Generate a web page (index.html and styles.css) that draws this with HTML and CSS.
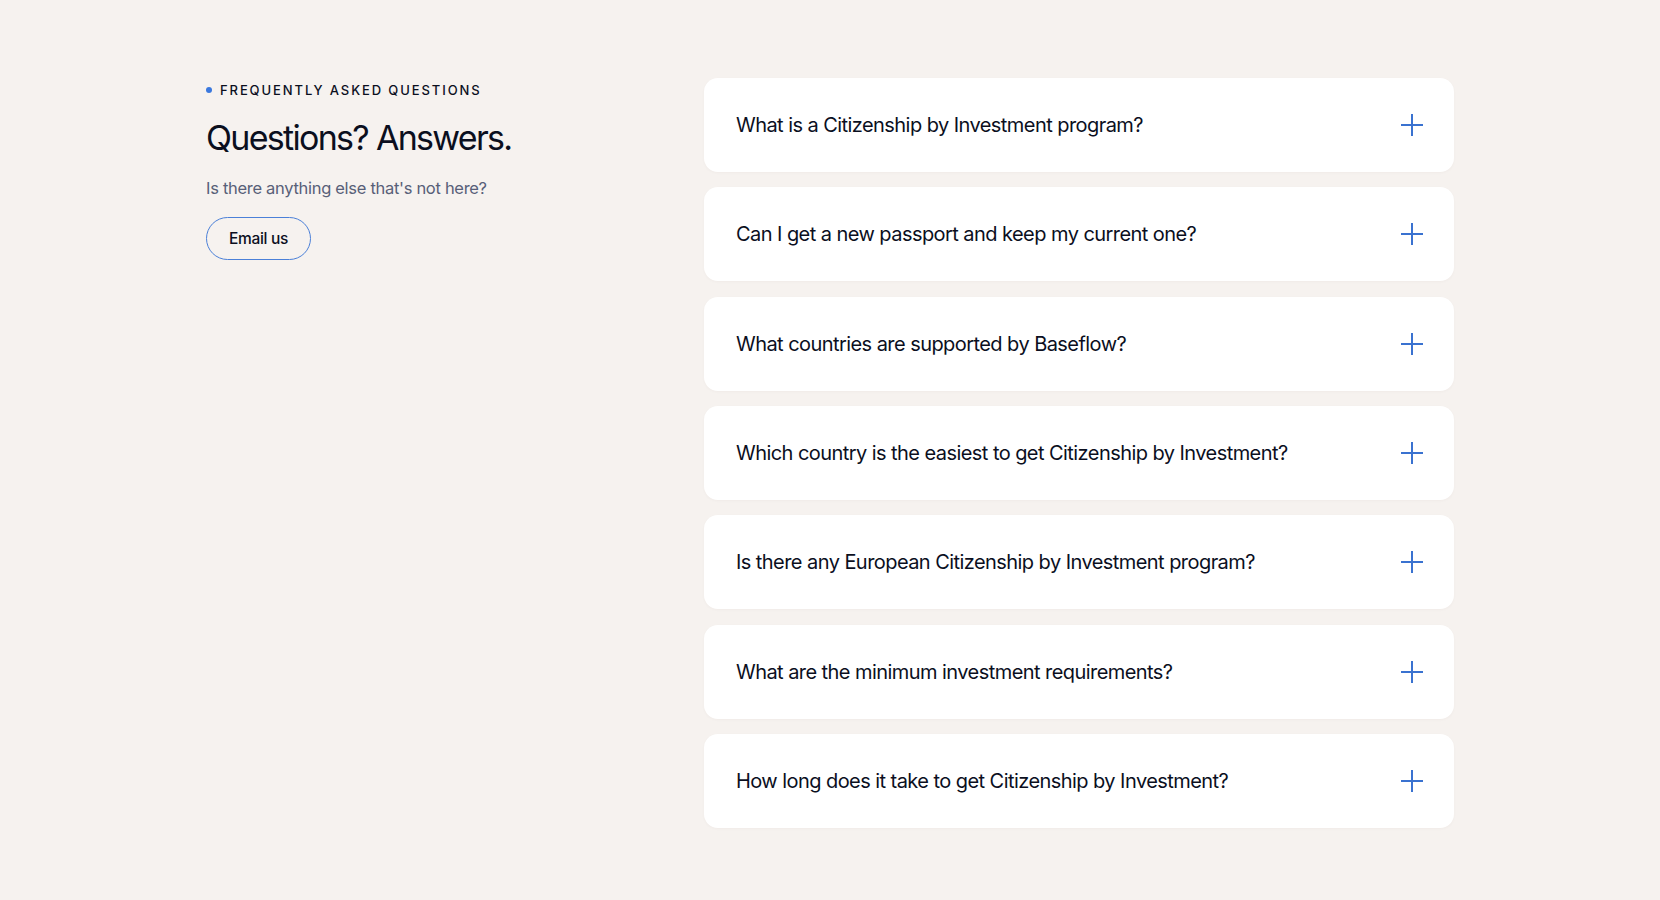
FILE: index.html
```html
<!DOCTYPE html>
<html lang="en">
<head>
    <meta charset="UTF-8">
    <meta name="viewport" content="width=device-width, initial-scale=1.0">
    <title>FAQ</title>
    <link rel="stylesheet" href="styles.css">
</head>
<body>
    <section class="faq">
        <div class="faq-intro">
            <div class="eyebrow">
                <span class="eyebrow-dot"></span>
                Frequently asked questions
            </div>
            <h2>Questions? Answers.</h2>
            <p class="lead">Is there anything else that's not here?</p>
            <a href="#" class="btn-outline">Email us</a>
        </div>

        <div class="faq-list">
            <div class="faq-item">
                <span>What is a Citizenship by Investment program?</span>
                <svg class="plus" viewBox="0 0 24 24"><path d="M12 1v22M1 12h22"/></svg>
            </div>
            <div class="faq-item">
                <span>Can I get a new passport and keep my current one?</span>
                <svg class="plus" viewBox="0 0 24 24"><path d="M12 1v22M1 12h22"/></svg>
            </div>
            <div class="faq-item">
                <span>What countries are supported by Baseflow?</span>
                <svg class="plus" viewBox="0 0 24 24"><path d="M12 1v22M1 12h22"/></svg>
            </div>
            <div class="faq-item">
                <span>Which country is the easiest to get Citizenship by Investment?</span>
                <svg class="plus" viewBox="0 0 24 24"><path d="M12 1v22M1 12h22"/></svg>
            </div>
            <div class="faq-item">
                <span>Is there any European Citizenship by Investment program?</span>
                <svg class="plus" viewBox="0 0 24 24"><path d="M12 1v22M1 12h22"/></svg>
            </div>
            <div class="faq-item">
                <span>What are the minimum investment requirements?</span>
                <svg class="plus" viewBox="0 0 24 24"><path d="M12 1v22M1 12h22"/></svg>
            </div>
            <div class="faq-item">
                <span>How long does it take to get Citizenship by Investment?</span>
                <svg class="plus" viewBox="0 0 24 24"><path d="M12 1v22M1 12h22"/></svg>
            </div>
        </div>
    </section>
</body>
</html>
```

FILE: styles.css
```css
* {
    margin: 0;
    padding: 0;
    box-sizing: border-box;
}

body {
    font-family: Inter, 'Noto Sans', sans-serif;
    background: #f6f2ef;
    color: #0b0f1e;
    min-height: 100vh;
}

.faq {
    width: 1248px;
    margin: 0 auto;
    padding-top: 78px;
    display: grid;
    grid-template-columns: 1fr 750px;
}

.eyebrow {
    display: flex;
    align-items: center;
    font-size: 13px;
    font-weight: 500;
    letter-spacing: 1.9px;
    text-transform: uppercase;
    margin-top: 4px;
}

.eyebrow-dot {
    width: 6px;
    height: 6px;
    border-radius: 50%;
    background: #3a78de;
    margin-right: 8px;
}

h2 {
    font-size: 34px;
    font-weight: 400;
    letter-spacing: -1.7px;
    margin-top: 20px;
    line-height: 1.2;
}

.lead {
    font-size: 16.5px;
    letter-spacing: -0.3px;
    color: #586078;
    margin-top: 19px;
}

.btn-outline {
    display: inline-block;
    margin-top: 19px;
    padding: 11px 22px;
    border: 1.5px solid #4b80d8;
    border-radius: 30px;
    color: #0b0f1e;
    text-decoration: none;
    font-size: 15.5px;
    letter-spacing: -0.3px;
    font-weight: 500;
}

.faq-list {
    display: flex;
    flex-direction: column;
    gap: 15.33px;
}

.faq-item {
    height: 94px;
    background: #fff;
    border-radius: 14px;
    display: flex;
    align-items: center;
    justify-content: space-between;
    padding: 0 30px 0 32px;
    font-size: 20px;
    letter-spacing: -0.56px;
    box-shadow: 0 1px 3px rgba(60, 40, 20, 0.03);
}

.plus {
    width: 24px;
    height: 24px;
    stroke: #3a72d0;
    stroke-width: 2;
    fill: none;
}
```
